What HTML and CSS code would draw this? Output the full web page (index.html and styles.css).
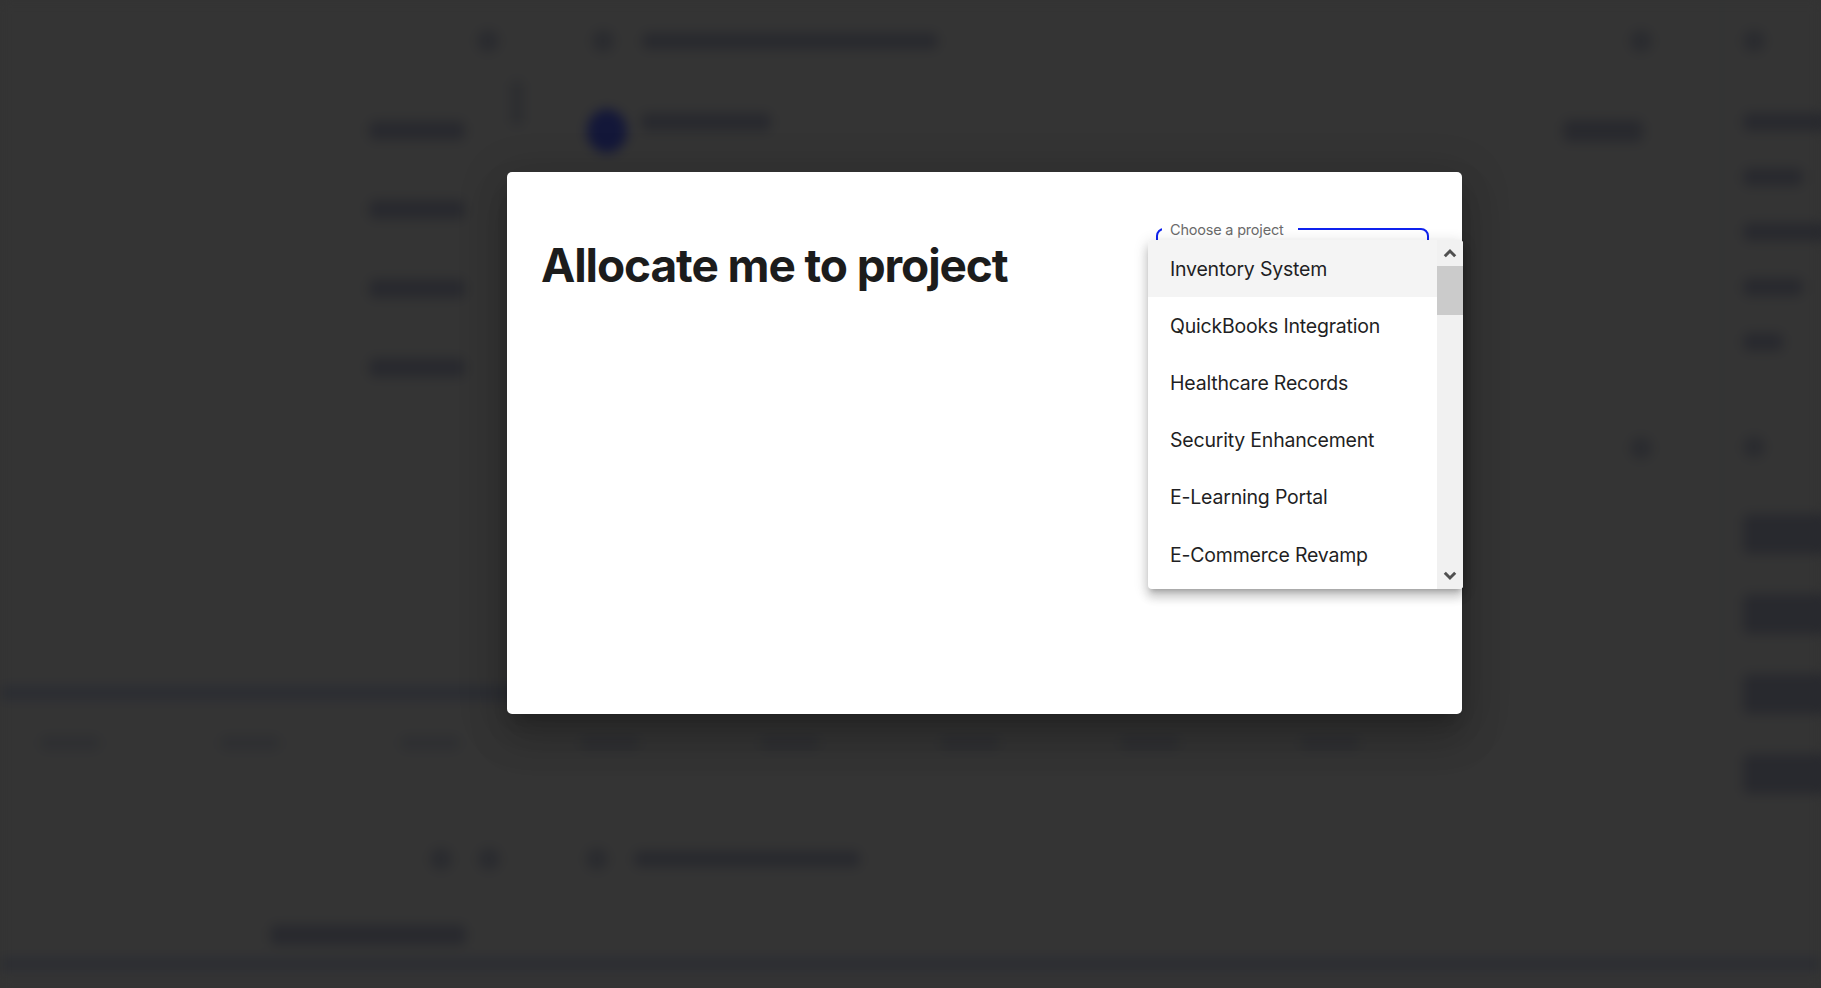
FILE: index.html
```html
<!DOCTYPE html>
<html lang="en">
<head>
<meta charset="utf-8">
<title>Allocate me to project</title>
<link rel="stylesheet" href="styles.css">
</head>
<body>
<div class="app" aria-hidden="true">
  <aside class="side">
    <span class="dot dot-top"></span>
    <span class="bar-v"></span>
    <nav class="nav">
      <span class="blob nav-blob"></span>
      <span class="blob nav-blob"></span>
      <span class="blob nav-blob"></span>
      <span class="blob nav-blob"></span>
    </nav>
  </aside>
  <main class="main">
    <div class="row head">
      <span class="dot"></span>
      <span class="blob head-text"></span>
      <span class="grow"></span>
      <span class="dot"></span>
    </div>
    <div class="row profile">
      <span class="avatar"></span>
      <span class="blob name"></span>
      <span class="grow"></span>
      <span class="blob btn"></span>
    </div>
    <div class="row mid">
      <span class="grow"></span>
      <span class="dot"></span>
    </div>
  </main>
  <aside class="right">
    <span class="dot"></span>
    <span class="blob r-blob first"></span>
    <span class="blob r-blob short"></span>
    <span class="blob r-blob"></span>
    <span class="blob r-blob short"></span>
    <span class="blob r-blob tiny"></span>
    <span class="dot r-dot"></span>
    <span class="blob r-card"></span>
    <span class="blob r-card"></span>
    <span class="blob r-card"></span>
    <span class="blob r-card"></span>
  </aside>
  <div class="band"></div>
  <div class="tabs">
    <span class="blob tab"></span><span class="blob tab"></span><span class="blob tab"></span><span class="blob tab"></span><span class="blob tab"></span><span class="blob tab"></span><span class="blob tab"></span><span class="blob tab"></span>
  </div>
  <div class="bottom">
    <div class="b-row">
      <span class="dot"></span><span class="dot"></span>
      <span class="dot b-gap"></span>
      <span class="blob b-text"></span>
    </div>
    <div class="b-row2">
      <span class="blob b-left"></span>
    </div>
    <div class="band band-bottom"></div>
  </div>
</div>

<div class="modal" role="dialog" aria-labelledby="dlg-title">
  <div class="modal-head">
    <h1 id="dlg-title" class="title">Allocate me to project</h1>
    <div class="field">
      <span class="field-label">Choose a project</span>
      <div class="field-box"></div>
      <div class="dropdown" role="listbox">
        <ul class="options">
          <li class="option active" role="option">Inventory System</li>
          <li class="option" role="option">QuickBooks Integration</li>
          <li class="option" role="option">Healthcare Records</li>
          <li class="option" role="option">Security Enhancement</li>
          <li class="option" role="option">E-Learning Portal</li>
          <li class="option" role="option">E-Commerce Revamp</li>
        </ul>
        <div class="scrollbar">
          <span class="sb-btn">
            <svg width="14" height="10" viewBox="0 0 14 10"><path d="M1.8 8.2 L7 3 L12.2 8.2" fill="none" stroke="#505050" stroke-width="3"/></svg>
          </span>
          <span class="sb-thumb"></span>
          <span class="sb-track"></span>
          <span class="sb-btn">
            <svg width="14" height="10" viewBox="0 0 14 10"><path d="M1.8 1.8 L7 7 L12.2 1.8" fill="none" stroke="#505050" stroke-width="3"/></svg>
          </span>
        </div>
      </div>
    </div>
  </div>
</div>
</body>
</html>
```
FILE: styles.css
```css
* { box-sizing: border-box; }
html, body { margin: 0; padding: 0; }
body {
  width: 1821px;
  height: 988px;
  overflow: hidden;
  background: #333333;
  font-family: Inter, "Noto Sans", sans-serif;
  position: relative;
}

/* ---------- blurred background app ---------- */
.app {
  display: grid;
  grid-template-columns: 520px 1fr 100px;
  grid-template-rows: 680px 28px 50px 1fr;
  height: 988px;
  filter: blur(6px);
  background: #343434;
}
.app * { flex-shrink: 0; }
.blob { display: block; background: #28292e; border-radius: 6px; }
.dot { display: block; width: 22px; height: 22px; border-radius: 50%; background: #2a2b2f; }
.grow { flex: 1; }

.side {
  grid-row: 1;
  display: flex;
  flex-direction: column;
  align-items: flex-end;
  padding: 30px 0 0 0;
}
.dot-top { margin-right: 21px; }
.bar-v { display: block; width: 12px; height: 46px; background: #2c2d30; border-radius: 6px; margin: 28px -3px 0 0; }
.nav { display: flex; flex-direction: column; gap: 60px; margin: -5px 55px 0 0; }
.nav-blob { width: 96px; height: 19px; }

.main { grid-row: 1; display: flex; flex-direction: column; padding: 30px 69px 0 72px; }
.row { display: flex; align-items: center; gap: 14px; }
.head-text { width: 296px; height: 16px; margin-left: 14px; }
.profile { margin-top: 57px; }
.avatar { display: block; width: 40px; height: 44px; border-radius: 50%; background: #131739; margin-left: -5px; }
.name { width: 130px; height: 18px; margin-top: -18px; }
.btn { width: 80px; height: 22px; margin-right: 9px; }
.mid { margin-top: 284px; }

.right { grid-row: 1; display: flex; flex-direction: column; align-items: flex-start; padding: 30px 0 0 20px; border-left: 2px solid #303133; }
.r-blob { width: 90px; height: 18px; margin-top: 37px; }
.r-blob.first { margin-top: 61px; }
.r-blob.short { width: 60px; }
.r-blob.tiny { width: 40px; }
.r-dot { margin-top: 85px; }
.r-card { width: 90px; height: 40px; margin-top: 40px; }
.r-dot + .r-card { margin-top: 56px; }

.band { grid-column: 1 / 3; background: #2b2d33; height: 14px; margin: 6px 420px 0 0; border-radius: 7px; }
.tabs { grid-column: 1 / 3; display: flex; gap: 120px; padding: 28px 0 0 40px; }
.tab { width: 60px; height: 14px; background: #2e2f32; }
.bottom { grid-column: 1 / 4; display: flex; flex-direction: column; padding: 90px 0 0 430px; }
.b-row { display: flex; align-items: center; gap: 26px; }
.b-gap { margin-left: 60px; }
.b-text { width: 226px; height: 16px; }
.b-row2 { display: flex; margin: 55px 0 0 -160px; }
.b-left { width: 196px; height: 20px; }
.band-bottom { margin: 13px 0 0 -430px; width: 1821px; height: 12px; }

/* ---------- modal ---------- */
.modal {
  position: absolute;
  left: 507px;
  top: 172px;
  width: 955px;
  height: 542px;
  background: #ffffff;
  border-radius: 5px;
  box-shadow: 0 11px 15px -7px rgba(0,0,0,0.2), 0 24px 38px 3px rgba(0,0,0,0.14), 0 9px 46px 8px rgba(0,0,0,0.12);
  padding: 56px 33px 0 34px;
}
.modal-head { display: flex; justify-content: space-between; align-items: flex-start; }
.title {
  margin: 10px 0 0 0;
  font-size: 46px;
  line-height: 1.2;
  font-weight: 700;
  letter-spacing: -1.1px;
  color: #1c1c1c;
}

.field { position: relative; width: 273px; }
.field-box { height: 56px; border: 2px solid #0f22ee; border-radius: 8px; }
.field-label {
  position: absolute;
  left: 6px;
  top: -7px;
  padding: 0 14px 0 8px;
  background: #fff;
  font-size: 14.5px;
  line-height: 18px;
  color: #6b6b6b;
  letter-spacing: -0.2px;
}

.dropdown {
  position: absolute;
  left: -8px;
  top: 12px;
  width: 315px;
  height: 349px;
  display: flex;
  background: #fff;
  border-radius: 4px;
  box-shadow: 0 5px 5px -3px rgba(0,0,0,0.2), 0 8px 10px 1px rgba(0,0,0,0.14), 0 3px 14px 2px rgba(0,0,0,0.12);
  overflow: hidden;
}
.options { flex: 1; margin: 0; padding: 0; list-style: none; }
.option {
  height: 57.2px;
  display: flex;
  align-items: center;
  padding-left: 22px;
  font-size: 19.5px;
  color: #1f1f24;
  letter-spacing: -0.2px;
}
.option.active { background: #f4f4f4; }

.scrollbar { width: 26px; display: flex; flex-direction: column; background: #f1f1f1; }
.sb-btn { height: 26px; display: flex; align-items: center; justify-content: center; background: #f1f1f1; }
.sb-thumb { height: 49px; background: #cbcbcb; }
.sb-track { flex: 1; }
```
